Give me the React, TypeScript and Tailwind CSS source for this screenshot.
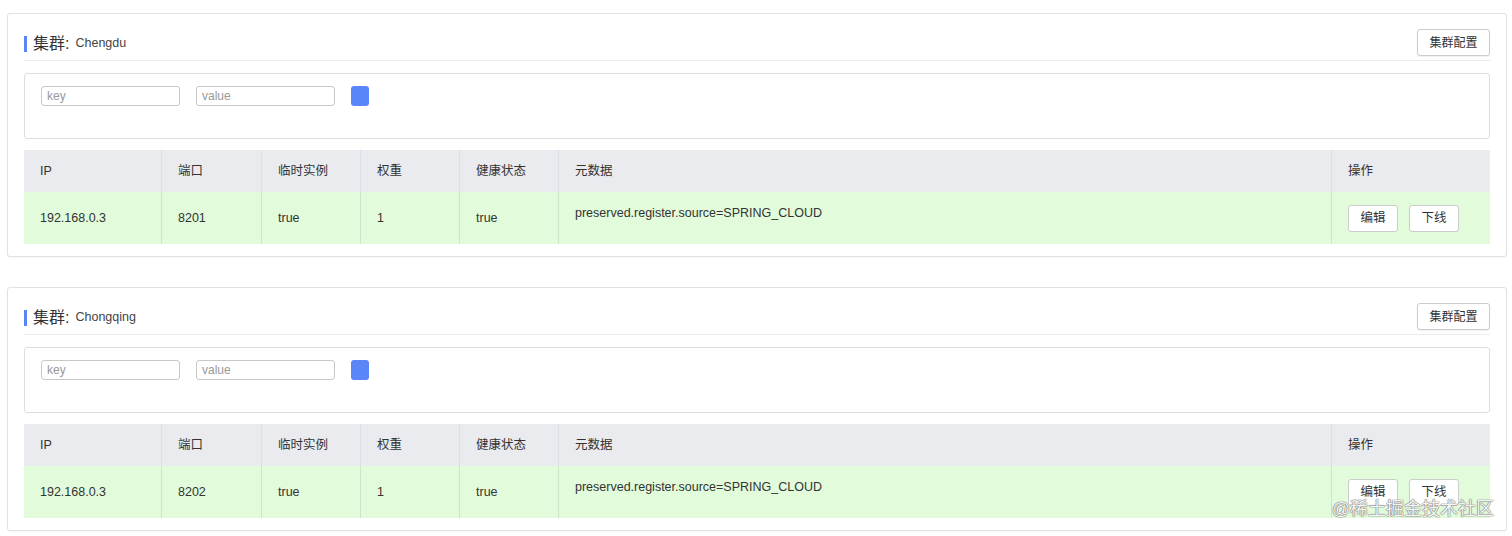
import React from "react";

const font = { fontFamily: '"Liberation Sans", "Noto Sans CJK SC", sans-serif' };

const clusters = [
  { name: "Chengdu", ip: "192.168.0.3", port: "8201" },
  { name: "Chongqing", ip: "192.168.0.3", port: "8202" },
];

const cols = "grid grid-cols-[137px_100px_99px_99px_99px_1fr_159px]";

function ClusterCard({ name, ip, port }: { name: string; ip: string; port: string }) {
  return (
    <div className="ml-[7px] mr-[5px] rounded-[3px] border border-[#e2e2e2] bg-white px-[16px] pt-[15px] pb-[12px] shadow-[0_1px_2px_rgba(0,0,0,0.04)]">
      {/* 标题 */}
      <div className="flex items-center justify-between border-b border-[#ececec] pb-[4px]">
        <div className="flex items-center pt-[2px]">
          <span className="mr-[6px] h-[16px] w-[3px] bg-[#5b84f5]" />
          <span className="text-[16px] text-[#333]">集群:</span>
          <span className="ml-[6px] text-[12.5px] text-[#444]">{name}</span>
        </div>
        <button className="h-[27px] w-[73px] rounded-[3px] border border-[#ccc] bg-white text-[12px] text-[#333] shadow-[0_1px_1px_rgba(0,0,0,0.06)]">
          集群配置
        </button>
      </div>

      {/* 过滤 */}
      <div className="mt-[12px] h-[66px] rounded-[3px] border border-[#dedede] bg-white px-[16px] pt-[12px]">
        <div className="flex items-center gap-[16px]">
          <input
            placeholder="key"
            className="h-[20px] w-[139px] rounded-[3px] border border-[#c8c8c8] px-[5px] text-[12px] text-[#333] outline-none placeholder:text-[#999]"
          />
          <input
            placeholder="value"
            className="h-[20px] w-[139px] rounded-[3px] border border-[#c8c8c8] px-[5px] text-[12px] text-[#333] outline-none placeholder:text-[#999]"
          />
          <button className="h-[20px] w-[18px] rounded-[3px] bg-[#5b86f7]" />
        </div>
      </div>

      {/* 表格 */}
      <div className="mt-[11px] text-[12.5px] text-[#333]">
        <div className={`${cols} h-[42px] bg-[#e9ebee]`}>
          {["IP", "端口", "临时实例", "权重", "健康状态", "元数据", "操作"].map((h, i) => (
            <div
              key={h}
              className={`flex items-center pl-[16px] ${i > 0 ? "border-l border-[#dcdfe3]" : ""}`}
            >
              {h}
            </div>
          ))}
        </div>
        <div className={`${cols} h-[52px] bg-[#e2fbdb]`}>
          <div className="flex items-center pl-[16px]">{ip}</div>
          <div className="flex items-center border-l border-[#cfe3cb] pl-[16px]">{port}</div>
          <div className="flex items-center border-l border-[#cfe3cb] pl-[16px]">true</div>
          <div className="flex items-center border-l border-[#cfe3cb] pl-[16px]">1</div>
          <div className="flex items-center border-l border-[#cfe3cb] pl-[16px]">true</div>
          <div className="flex items-center border-l border-[#cfe3cb] pb-[10px] pl-[16px]">
            preserved.register.source=SPRING_CLOUD
          </div>
          <div className="flex items-center gap-[11px] border-l border-[#cfe3cb] pl-[16px]">
            <button className="h-[27px] w-[50px] rounded-[3px] border border-[#ccc] bg-white text-[12.5px] text-[#333]">
              编辑
            </button>
            <button className="h-[27px] w-[50px] rounded-[3px] border border-[#ccc] bg-white text-[12.5px] text-[#333]">
              下线
            </button>
          </div>
        </div>
      </div>
    </div>
  );
}

export default function App() {
  return (
    <div className="relative h-[536px] w-[1512px] overflow-hidden bg-white pt-[13px]" style={font}>
      <div className="flex flex-col gap-[30px]">
        {clusters.map((c) => (
          <ClusterCard key={c.name} {...c} />
        ))}
      </div>
      {/* 水印 */}
      <div className="absolute right-[18px] top-[496px] text-[18px] text-[#f4f4f4] [text-shadow:0_0_1px_#777,0_0_1px_#777,0_0_1px_#777]">
        @稀土掘金技术社区
      </div>
    </div>
  );
}
